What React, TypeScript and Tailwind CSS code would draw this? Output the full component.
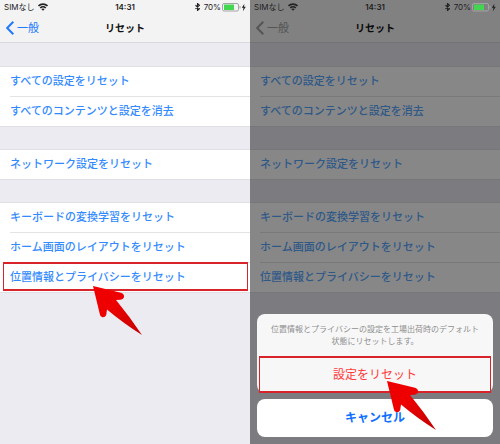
import type { ReactNode } from 'react';

const GROUPS = [
  ['すべての設定をリセット', 'すべてのコンテンツと設定を消去'],
  ['ネットワーク設定をリセット'],
  ['キーボードの変換学習をリセット', 'ホーム画面のレイアウトをリセット', '位置情報とプライバシーをリセット'],
];

const TARGET = '位置情報とプライバシーをリセット';

function WifiIcon() {
  return (
    <svg viewBox="0 0 20 15" className="ml-[3px] h-2 w-[10px]" fill="none" stroke="currentColor" strokeWidth="3.2">
      <path d="M1 5.5C6 .5 14 .5 19 5.5" />
      <path d="M4.5 9.4C7.5 6.4 12.5 6.4 15.5 9.4" />
      <path d="M10 15 6.6 11.6C8.5 10 11.5 10 13.4 11.6Z" fill="currentColor" stroke="none" />
    </svg>
  );
}

function BluetoothIcon() {
  return (
    <svg viewBox="0 0 10 16" className="h-2 w-[5px]" fill="none" stroke="currentColor" strokeWidth="2.2">
      <path d="M1 4.5 9 11.5 5 15V1L9 4.5 1 11.5" />
    </svg>
  );
}

function BatteryIcon() {
  return (
    <svg viewBox="0 0 24 9" className="h-[9px] w-6">
      <rect x=".5" y=".5" width="16" height="7.5" rx="1.5" fill="none" stroke="#a4a4a6" />
      <rect x="2" y="1.5" width="10" height="5.5" fill="#43d651" />
      <path d="M18 3v2.5" stroke="#a4a4a6" />
      <path d="M22.4.8 19.8 4.8h1.7L20.9 8.2l2.9-4.4h-1.8Z" fill="currentColor" />
    </svg>
  );
}

function StatusBar() {
  return (
    <div className="relative z-20 grid h-[14px] grid-cols-3 items-center px-1 font-[Inter,'Noto_Sans_CJK_JP',sans-serif] text-[8px] text-[#222]">
      <div className="flex items-center">SIMなし<WifiIcon /></div>
      <div className="text-center font-semibold">14:31</div>
      <div className="flex items-center justify-end gap-px">
        <BluetoothIcon />
        <span className="ml-[3px]">70%</span>
        <BatteryIcon />
      </div>
    </div>
  );
}

function Arrow({ id }: { id: string }) {
  return (
    <svg viewBox="0 0 50 50" className="size-[50px]">
      <defs>
        <linearGradient id={id} x1="0" y1="0" x2="1" y2="1">
          <stop offset=".4" stopColor="#ee0000" />
          <stop offset="1" stopColor="#c20000" />
        </linearGradient>
      </defs>
      <path
        d="M0 0 28 6.8Q31.5 8.2 31 11 30 13.8 27 13.8L23 14Q37 31 49 49 30 37 14 23.5L13.2 29Q12 31.6 9.4 31.2 7 30.8 6.8 28Z"
        fill={`url(#${id})`}
      />
    </svg>
  );
}

function Screen({ highlighted, dimmed, children }: { highlighted?: boolean; dimmed?: boolean; children?: ReactNode }) {
  const backColor = dimmed ? 'text-[#a0a0a0]' : 'text-[#207aff]';
  const linkColor = dimmed ? 'text-[#58a8ff]' : 'text-[#338aff]';

  return (
    <section className="relative flex-1 bg-[#ebebf1]">
      <header className="border-b border-[#d9d9dd] bg-[#f3f3f4]">
        <StatusBar />
        <div className="grid h-7 grid-cols-3 items-center px-[6px]">
          <button type="button" className={`flex items-center gap-[3px] text-[11px] ${backColor}`}>
            <svg viewBox="0 0 8 14" className="h-[14px] w-2" fill="none" stroke="currentColor" strokeWidth="2">
              <path d="M7.3.7 1.2 7l6.1 6.3" />
            </svg>
            一般
          </button>
          <h1 className="text-center text-[10px] font-bold text-[#111]">リセット</h1>
        </div>
      </header>

      <main className="flex flex-col gap-[22px] pt-[23px]">
        {GROUPS.map((items) => (
          <ul key={items[0]} className="border-y border-[#e0e0e4] bg-white pl-[10px]">
            {items.map((item, i) => (
              <li key={item} className={i > 0 ? 'border-t border-[#e4e4e7]' : ''}>
                <button type="button" className={`block h-[29px] w-full text-left text-[11px] font-medium ${linkColor}`}>
                  {item}
                </button>
                {highlighted && item === TARGET && (
                  <div className="relative">
                    <div className="pointer-events-none absolute right-[2px] bottom-px -left-[7px] h-[29px] border-x border-y-2 border-[#d8232a]" />
                    <div className="pointer-events-none absolute -top-[6px] left-[83px]"><Arrow id="arrow-row" /></div>
                  </div>
                )}
              </li>
            ))}
          </ul>
        ))}
      </main>

      {dimmed && <div className="absolute inset-0 z-10 bg-black/47" />}
      {children}
    </section>
  );
}

function ActionSheet() {
  return (
    <div role="dialog" aria-label="設定をリセット" className="absolute inset-x-[7px] bottom-[7px] z-20 flex flex-col gap-[6px]">
      <div className="rounded-lg bg-[#f7f7f7]">
        <p className="px-3 pt-[10px] pb-2 text-center text-[8px] leading-[12px] text-[#8f8f8f]">
          位置情報とプライバシーの設定を工場出荷時のデフォルト<br />状態にリセットします。
        </p>
        <div className="relative px-[2px]">
          <button type="button" className="block h-[37px] w-full border-x border-y-2 border-[#d8232a] text-[12px] text-[#ff3b3b]">
            設定をリセット
          </button>
          <div className="pointer-events-none absolute top-[25px] left-[130px] z-10"><Arrow id="arrow-sheet" /></div>
        </div>
      </div>
      <button type="button" className="h-[38px] rounded-lg bg-white text-[12px] font-bold text-[#0f70ff]">キャンセル</button>
    </div>
  );
}

export default function App() {
  return (
    <div className="flex min-h-screen font-['Liberation_Sans','Noto_Sans_CJK_JP',sans-serif]">
      <Screen highlighted />
      <Screen dimmed>
        <ActionSheet />
      </Screen>
    </div>
  );
}
